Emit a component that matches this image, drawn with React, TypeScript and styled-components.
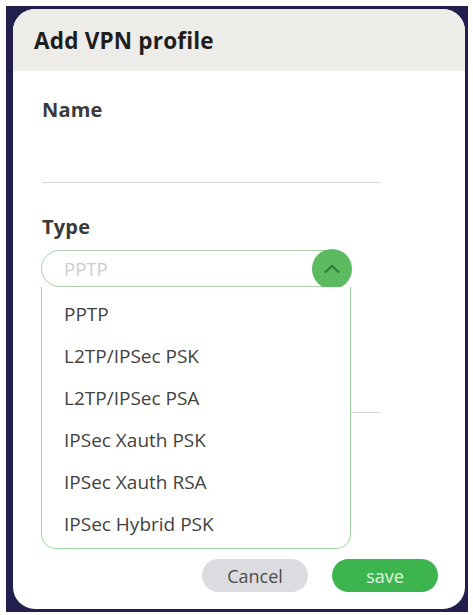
import styled, { createGlobalStyle } from "styled-components";

const GlobalStyle = createGlobalStyle`
  html, body {
    margin: 0;
    padding: 0;
    background: #ffffff;
  }
  body {
    font-family: "Open Sans", "Noto Sans", sans-serif;
    padding: 6px 5px 3px 6px;
  }
`;

const Frame = styled.div`
  width: 462px;
  height: 606px;
  box-sizing: border-box;
  background: #221f4f;
  padding: 3px 3px 3px 7px;
`;

const Card = styled.div`
  height: 100%;
  background: #ffffff;
  border-radius: 22px;
  overflow: hidden;
  display: flex;
  flex-direction: column;
`;

const Header = styled.div`
  height: 61px;
  flex-shrink: 0;
  background: #eeece9;
  display: flex;
  align-items: center;
  padding: 0 21px;
  padding-top: 1px;
`;

const Title = styled.h1`
  margin: 0;
  font-size: 22.5px;
  font-weight: 700;
  color: #1e1e1e;
  letter-spacing: 0.2px;
`;

const Content = styled.div`
  flex: 1;
  display: flex;
  flex-direction: column;
  padding: 26px 27px 17px 29px;
`;

const Label = styled.div<{ spaceTop?: number }>`
  margin-top: ${(props) => props.spaceTop ?? 0}px;
  font-size: 20px;
  line-height: 26px;
  font-weight: 700;
  color: #3a3a3a;
  letter-spacing: 0.2px;
`;

const LineInput = styled.input<{ boxHeight: number; spaceTop?: number }>`
  display: block;
  width: 338px;
  height: ${(props) => props.boxHeight}px;
  margin-top: ${(props) => props.spaceTop ?? 0}px;
  box-sizing: border-box;
  border: none;
  border-bottom: 1px solid #d8d8d8;
  outline: none;
  background: transparent;
  font-family: inherit;
  font-size: 18px;
`;

const SelectWrap = styled.div`
  position: relative;
  width: 310px;
  margin-top: 10px;
  margin-left: -1px;
  z-index: 2;
`;

const SelectBox = styled.div`
  height: 37px;
  box-sizing: border-box;
  border: 1.5px solid #aecdac;
  border-radius: 19px;
  background: #ffffff;
  display: flex;
  align-items: center;
  padding-left: 22px;
`;

const Placeholder = styled.span`
  flex: 1;
  font-size: 18.5px;
  color: #cdcdcd;
`;

const ToggleBtn = styled.div`
  width: 40px;
  height: 40px;
  margin: -3px -2px -3px 0;
  border-radius: 50%;
  background: #5cba60;
  display: flex;
  align-items: center;
  justify-content: center;
`;

const OptionList = styled.ul`
  position: absolute;
  top: 100%;
  left: 0;
  right: 0;
  margin: 0;
  padding: 6px 0 3px;
  list-style: none;
  background: #ffffff;
  border: 1.5px solid #9fd59e;
  border-top: none;
  border-radius: 0 0 15px 15px;
`;

const Option = styled.li`
  height: 42px;
  display: flex;
  align-items: center;
  padding-left: 22px;
  font-size: 19px;
  color: #424242;
`;

const Actions = styled.div`
  margin-top: auto;
  display: flex;
  justify-content: flex-end;
  gap: 24px;
`;

const ActionBtn = styled.button<{ primary?: boolean }>`
  width: 106px;
  height: 33px;
  border: none;
  border-radius: 17px;
  font-family: inherit;
  font-size: 18px;
  padding: 0;
  background: ${(props) => (props.primary ? "#3db54e" : "#dcdce0")};
  color: ${(props) => (props.primary ? "#dff5e0" : "#4d4d4d")};
`;

const types = [
  "PPTP",
  "L2TP/IPSec PSK",
  "L2TP/IPSec PSA",
  "IPSec Xauth PSK",
  "IPSec Xauth RSA",
  "IPSec Hybrid PSK",
];

export default function App() {
  return (
    <>
      <GlobalStyle />
      <Frame>
        <Card>
          <Header>
            <Title>Add VPN profile</Title>
          </Header>
          <Content>
            <Label>Name</Label>
            <LineInput boxHeight={60} />
            <Label spaceTop={31}>Type</Label>
            <SelectWrap>
              <SelectBox>
                <Placeholder>PPTP</Placeholder>
                <ToggleBtn>
                  <svg width="16" height="9" viewBox="0 0 16 9">
                    <path d="M1.5 8 L8 1.8 L14.5 8" fill="none" stroke="#2b7a37" strokeWidth="2" strokeLinecap="round" strokeLinejoin="round" />
                  </svg>
                </ToggleBtn>
              </SelectBox>
              <OptionList>
                {types.map((t) => (
                  <Option key={t}>{t}</Option>
                ))}
              </OptionList>
            </SelectWrap>
            <LineInput boxHeight={40} spaceTop={86} />
            <Actions>
              <ActionBtn>Cancel</ActionBtn>
              <ActionBtn primary>save</ActionBtn>
            </Actions>
          </Content>
        </Card>
      </Frame>
    </>
  );
}
